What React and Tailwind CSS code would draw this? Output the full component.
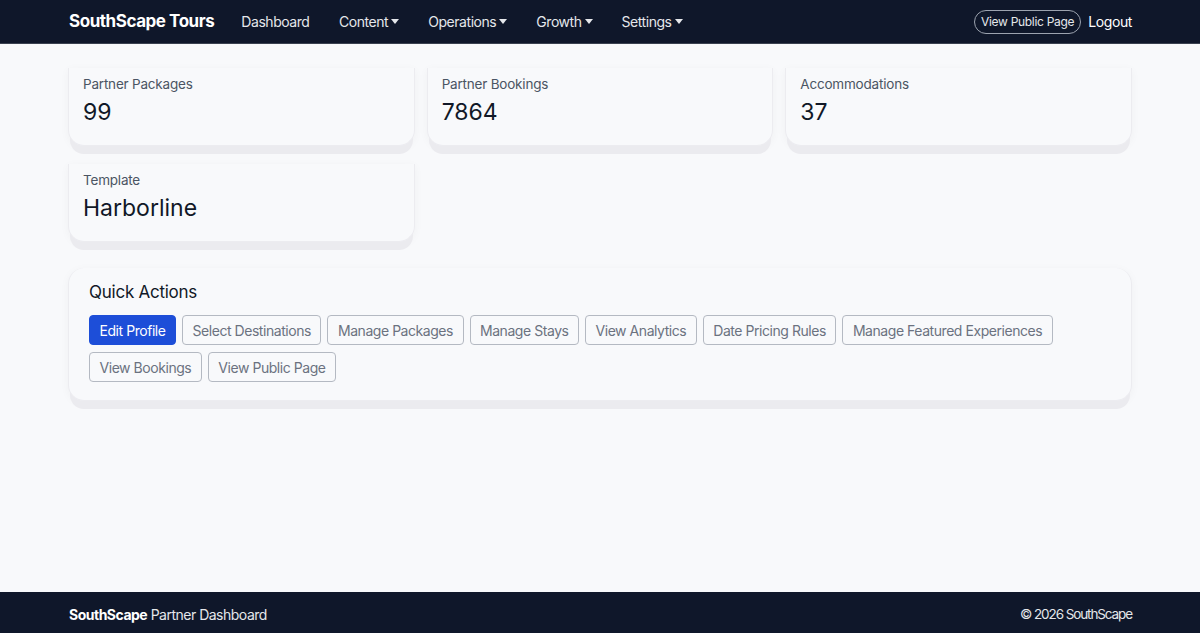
import React from 'react'

const navItems = [
    { label: 'Dashboard' },
    { label: 'Content', menu: true },
    { label: 'Operations', menu: true },
    { label: 'Growth', menu: true },
    { label: 'Settings', menu: true },
]

const stats = [
    { label: 'Partner Packages', value: '99' },
    { label: 'Partner Bookings', value: '7864' },
    { label: 'Accommodations', value: '37' },
    { label: 'Template', value: 'Harborline' },
]

const actions = [
    'Edit Profile',
    'Select Destinations',
    'Manage Packages',
    'Manage Stays',
    'View Analytics',
    'Date Pricing Rules',
    'Manage Featured Experiences',
    'View Bookings',
    'View Public Page',
]

const Caret = () => (
    <span className="ml-[3px] inline-block w-0 h-0 border-l-[4px] border-r-[4px] border-t-[5px] border-l-transparent border-r-transparent border-t-current align-middle" />
)

const StatCard = ({ label, value }) => (
    <div className="h-[78px] bg-[#f8f9fb] rounded-b-2xl border-x border-b border-[#ececf0] shadow-[0_10px_0_-2px_#ebebef,0_2px_10px_rgba(0,0,0,0.04)] px-[14px] pt-[6px]">
        <p className="text-[13.5px] text-[#4b5563] leading-5 tracking-[-0.2px] mb-[4px]">{label}</p>
        <h3 className="text-[23px] text-[#111827] leading-7">{value}</h3>
    </div>
)

export default function App() {
    return (
        <div className="min-h-[633px] flex flex-col bg-[#f8f9fb] font-['Inter',sans-serif]">
            {/* Top navigation */}
            <nav className="h-[44px] bg-[#0f172a] border-b border-[#3a4150] flex items-center justify-between px-[68px]">
                <div className="flex items-center">
                    <span className="text-[17px] font-bold text-white tracking-[-0.45px] ml-[1px] mr-[12px]">SouthScape Tours</span>
                    {navItems.map(item => (
                        <span key={item.label} className={`${item.menu ? 'px-[14.5px]' : 'px-[15px]'} text-[14px] text-[#e5e7eb] tracking-[-0.45px] flex items-center`}>
                            {item.label}
                            {item.menu && <Caret />}
                        </span>
                    ))}
                </div>
                <div className="flex items-center gap-[7px]">
                    <span className="border border-[#9ca3af] rounded-full px-[6px] h-[24px] flex items-center text-[12px] tracking-[-0.3px] text-[#e5e7eb]">View Public Page</span>
                    <span className="text-[14px] tracking-[-0.4px] text-white">Logout</span>
                </div>
            </nav>

            {/* Main */}
            <main className="flex-1 px-[68px] pt-[24px]">
                <div className="grid grid-cols-3 gap-x-3 gap-y-[18px]">
                    {stats.map(s => (
                        <StatCard key={s.label} {...s} />
                    ))}
                </div>

                <div className="mt-[26px] bg-[#f8f9fb] rounded-2xl border border-[#ececf0] border-t-0 shadow-[0_10px_0_-2px_#ebebef,0_2px_10px_rgba(0,0,0,0.04)] px-[20px] pt-[12px] pb-[18px]">
                    <h2 className="text-[17px] text-[#111827] leading-6 tracking-[-0.25px] mb-[11px]">Quick Actions</h2>
                    <div className="flex flex-wrap gap-x-[6px] gap-y-[7px]">
                        {actions.map((a, i) => (
                            <button
                                key={a}
                                className={`h-[30px] px-[9.5px] rounded-[4px] text-[14px] tracking-[-0.45px] border ${i === 0 ? 'bg-[#1d4ed8] border-[#1d4ed8] text-white' : 'bg-transparent border-[#b4b9c2] text-[#6b7280]'}`}
                            >
                                {a}
                            </button>
                        ))}
                    </div>
                </div>
            </main>

            {/* Footer */}
            <footer className="h-[41px] bg-[#0f172a] flex items-center justify-between px-[68px] pt-[4px] text-[14px] tracking-[-0.5px] text-[#e5e7eb]">
                <span className="ml-[1px]"><span className="font-bold text-white">SouthScape</span> Partner Dashboard</span>
                <span className="text-[13.5px] tracking-[-1.1px]">© 2026 SouthScape</span>
            </footer>
        </div>
    )
}
